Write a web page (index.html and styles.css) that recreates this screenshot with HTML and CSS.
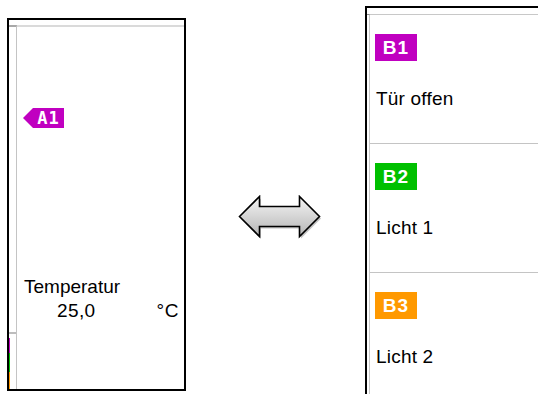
FILE: index.html
```html
<!DOCTYPE html>
<html lang="de">
<head>
<meta charset="utf-8">
<title>Zuordnung</title>
<link rel="stylesheet" href="styles.css">
</head>
<body>
<div class="stage">
  <div class="panel-left">
    <div class="lframe">
      <div class="gutter">
        <div class="gutter-space"></div>
        <div class="marks">
          <div class="mark mark-b1"></div>
          <div class="mark mark-b2"></div>
          <div class="mark mark-b3"></div>
        </div>
      </div>
      <div class="lcontent">
        <div class="tag">
          <svg class="tag-shape" width="41" height="20" viewBox="0 0 41 20"><polygon points="0,10 10,0 41,0 41,20 10,20" fill="#c000c0"/></svg>
          <span class="tag-text">A1</span>
        </div>
        <div class="temp">
          <div class="temp-label">Temperatur</div>
          <div class="temp-row"><span class="temp-value">25,0</span><span class="temp-unit">°C</span></div>
        </div>
      </div>
    </div>
  </div>

  <div class="arrow">
    <svg width="86" height="46" viewBox="0 0 86 46">
      <defs>
        <linearGradient id="ag" x1="0" y1="0" x2="0" y2="1">
          <stop offset="0" stop-color="#f6f6f6"/>
          <stop offset="1" stop-color="#b4b4b4"/>
        </linearGradient>
      </defs>
      <polygon points="3,23.5 23,3.5 23,13.5 63,13.5 63,3.5 83,23.5 63,43.5 63,33.5 23,33.5 23,43.5" fill="#9a9a9a" opacity="0.6"/>
      <polygon points="1.5,21.5 21.5,1.5 21.5,11.5 61.5,11.5 61.5,1.5 81.5,21.5 61.5,41.5 61.5,31.5 21.5,31.5 21.5,41.5" fill="url(#ag)" stroke="#000" stroke-width="1.6" stroke-linejoin="miter"/>
    </svg>
  </div>

  <div class="panel-right">
    <div class="rframe">
      <div class="rgutter"></div>
      <div class="rcontent">
        <div class="row">
          <div class="badge badge-b1">B1</div>
          <div class="row-label">Tür offen</div>
        </div>
        <div class="row">
          <div class="badge badge-b2">B2</div>
          <div class="row-label">Licht 1</div>
        </div>
        <div class="row">
          <div class="badge badge-b3">B3</div>
          <div class="row-label">Licht 2</div>
        </div>
      </div>
    </div>
  </div>
</div>
</body>
</html>
```

FILE: styles.css
```css
* { box-sizing: border-box; }
html, body { margin: 0; padding: 0; background: #fff; }
body { font-family: "Liberation Sans", Arial, sans-serif; color: #000; }

.stage {
  display: flex;
  align-items: flex-start;
  width: 538px;
  height: 394px;
  overflow: hidden;
}

/* left panel */
.panel-left {
  flex-shrink: 0;
  margin: 18px 0 0 7px;
  width: 179px;
  height: 373px;
  border: 2px solid #000;
  padding-top: 5px;
  background: #fff;
}
.lframe { display: flex; height: 100%; }
.gutter {
  width: 8px;
  display: flex;
  flex-direction: column;
  border-top: 2px solid #a8a8a8;
  border-right: 1px solid #c4c4c4;
}
.gutter-space { flex: 1; }
.marks {
  border-top: 2px solid #bdbdbd;
  padding-top: 4px;
}
.mark { width: 1px; }
.mark-b1 { height: 15px; background: #c000c0; }
.mark-b2 { height: 19px; background: #00c000; }
.mark-b3 { height: 17px; background: #ff9900; }

.lcontent {
  flex: 1;
  border-top: 2px solid #dadada;
  display: flex;
  flex-direction: column;
}
.tag {
  position: relative;
  width: 41px;
  height: 20px;
  margin: 81px 0 0 6px;
}
.tag-shape { display: block; }
.tag-text {
  position: absolute;
  left: 10px;
  top: 0;
  width: 31px;
  height: 20px;
  line-height: 20px;
  text-align: center;
  color: #fff;
  font-family: "DejaVu Sans Mono", monospace;
  font-weight: bold;
  font-size: 17px;
  letter-spacing: 1px;
}
.temp {
  margin: 149px 0 0 7px;
  width: 160px;
}
.temp-label { font-size: 19px; line-height: 20px; }
.temp-row {
  display: flex;
  justify-content: space-between;
  padding: 4px 6px 0 33px;
  font-size: 19px;
  line-height: 20px;
  letter-spacing: 0.4px;
}
.temp-unit { letter-spacing: 0.6px; margin-right: -1px; }

/* arrow */
.arrow {
  flex-shrink: 0;
  margin: 195px 0 0 52px;
  line-height: 0;
}

/* right panel */
.panel-right {
  flex-shrink: 0;
  margin: 6px 0 0 41px;
  width: 200px;
  height: 400px;
  border-top: 2px solid #000;
  border-left: 2px solid #000;
  padding-top: 6px;
}
.rframe { display: flex; height: 100%; }
.rgutter {
  width: 3px;
  border-top: 1px solid #8c8c8c;
  border-right: 1px solid #c8c8c8;
}
.rcontent {
  flex: 1;
  border-top: 1px solid #c8c8c8;
}
.row {
  height: 129px;
  border-bottom: 1px solid #c4c4c4;
  padding: 19px 0 0 5px;
}
.badge {
  width: 42px;
  height: 27px;
  line-height: 27px;
  text-align: center;
  color: #fff;
  font-weight: bold;
  font-size: 19px;
  letter-spacing: 1px;
}
.badge-b1 { background: #c000c0; }
.badge-b2 { background: #00c000; }
.badge-b3 { background: #ff9900; }
.row-label {
  margin-top: 28px;
  padding-left: 1px;
  font-size: 19px;
  line-height: 20px;
  letter-spacing: 0.2px;
}
```
